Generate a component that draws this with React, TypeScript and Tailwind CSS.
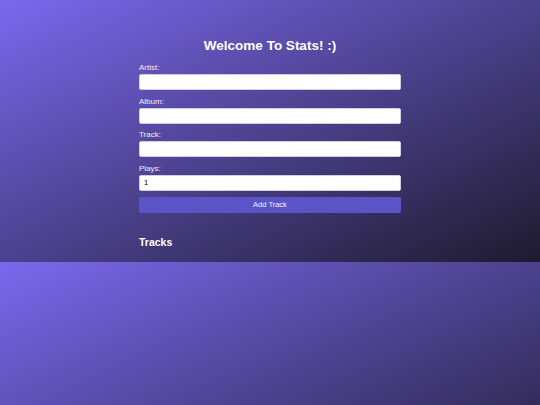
import { useState } from "react";

const grad = "bg-[linear-gradient(to_bottom_right,#7b68ee,#1e1b2e)]";

const Field = ({ label, value, onChange }: { label: string; value: string; onChange: (v: string) => void }) => {
  return (
    <div className="flex flex-col">
      <label className="text-[8px] leading-[10px] text-white/90 mb-px">{label}</label>
      <input
        className="h-4 w-full rounded-[2px] border border-[#cfcfe0] bg-white px-[4px] text-[7.5px] text-black outline-none"
        value={value}
        onChange={(e) => onChange(e.target.value)}
      />
    </div>
  );
};

const App = () => {
  const [artist, setArtist] = useState("");
  const [album, setAlbum] = useState("");
  const [track, setTrack] = useState("");
  const [plays, setPlays] = useState("1");

  return (
    <div className="font-['Liberation_Sans',Arial,sans-serif]">
      <div className={`${grad} h-[262px] pt-[37px]`}>
        <h1 className="text-center text-[13.5px] leading-[18px] font-bold text-white">Welcome To Stats! :)</h1>
        <div className="mx-auto mt-[8px] w-[262px] flex flex-col gap-[6.5px]">
          <Field label="Artist:" value={artist} onChange={setArtist} />
          <Field label="Album:" value={album} onChange={setAlbum} />
          <Field label="Track:" value={track} onChange={setTrack} />
          <Field label="Plays:" value={plays} onChange={setPlays} />
          <button
            type="button"
            className="h-4 w-full rounded-[2px] bg-[#5a54c6] text-[7.5px] text-white/90"
          >
            Add Track
          </button>
          <h2 className="mt-[15px] text-[10.5px] leading-[14px] font-bold text-white">Tracks</h2>
        </div>
      </div>
      <div className={`${grad} h-[143px] bg-size-[100%_262px] bg-no-repeat bg-top`}></div>
    </div>
  );
};

export default App;
